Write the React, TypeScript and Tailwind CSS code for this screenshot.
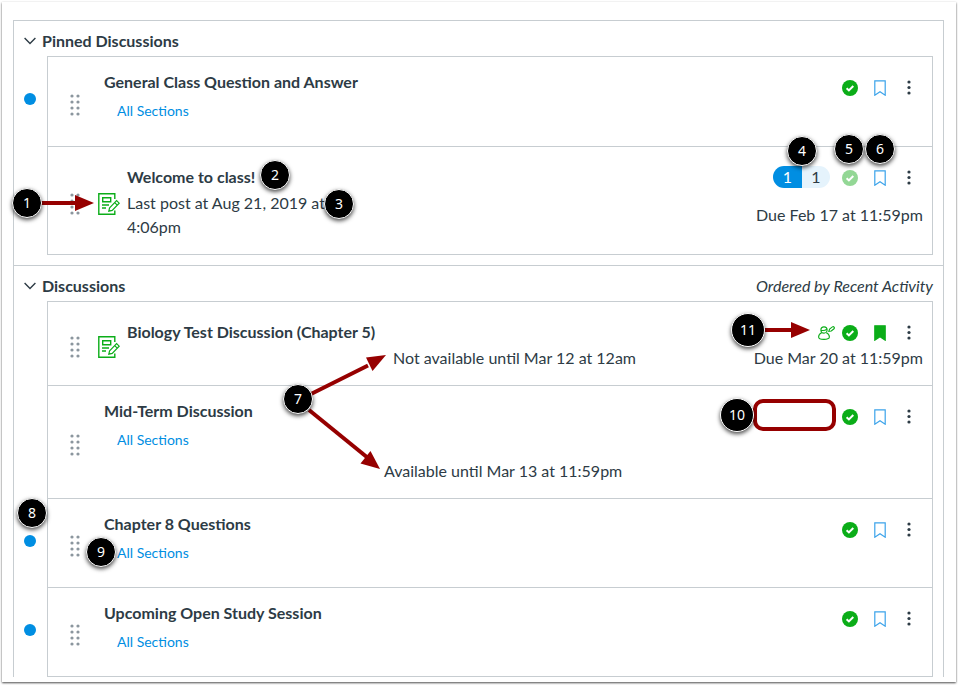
import { ReactNode } from "react";

type Discussion = {
  title: string;
  graded?: boolean;
  unread?: boolean;
  sections?: boolean;
  lastPost?: string;
  available?: string;
  due?: string;
  dueClass?: string;
  counts?: [number, number];
  faded?: boolean;
  subscribed?: boolean;
  peerReview?: boolean;
  rowClass?: string;
};

const pinned: Discussion[] = [
  { title: "General Class Question and Answer", unread: true, sections: true, rowClass: "min-h-[90px]" },
  {
    title: "Welcome to class!",
    graded: true,
    lastPost: "Last post at Aug 21, 2019 at 4:06pm",
    due: "Due Feb 17 at 11:59pm",
    dueClass: "mt-[13px]",
    counts: [1, 1],
    faded: true,
  },
];

const discussions: Discussion[] = [
  {
    title: "Biology Test Discussion (Chapter 5)",
    graded: true,
    available: "Not available until Mar 12 at 12am",
    due: "Due Mar 20 at 11:59pm",
    dueClass: "mt-px",
    subscribed: true,
    peerReview: true,
    rowClass: "min-h-[84px]",
  },
  {
    title: "Mid-Term Discussion",
    sections: true,
    available: "Available until Mar 13 at 11:59pm",
    rowClass: "min-h-[113px]",
  },
  { title: "Chapter 8 Questions", unread: true, sections: true },
  { title: "Upcoming Open Study Session", unread: true, sections: true },
];

const DragHandle = () => (
  <svg width="10" height="22" viewBox="0 0 10 22" fill="#8b969e" aria-hidden="true">
    {[2, 8].map((x) => [2, 8, 14, 20].map((y) => <circle key={`${x}-${y}`} cx={x} cy={y} r="1.6" />))}
  </svg>
);

const AssignmentIcon = () => (
  <svg width="22" height="22" viewBox="0 0 22 22" fill="none" stroke="#0bad18" strokeWidth="1.4" className="shrink-0">
    <path d="M16.800 6V.8H.8v20.4h16V17.500" />
    <path d="M4.700 4.700h8v4h-8zM4 12h7M4 15h4" />
    <path d="M11.600 14.800l7-7.200 2.600 2.600-7 7.200-3.400.8zM16.700 9.600l2.600 2.600" strokeWidth="1.2" />
  </svg>
);

const PeerReviewIcon = () => (
  <svg width="17" height="14" viewBox="0 0 17 14" fill="none" stroke="#0bad18" strokeWidth="1.1">
    <circle cx="6" cy="4" r="3.100" />
    <path d="M3 4.200c1.800.6 4.200.2 5.800-1" />
    <path d="M3.700 6.700C1.700 7.500.6 9 .6 11c0 1.700 2.500 2.400 5.400 2.400s5.400-.7 5.400-2.400c0-2-1.100-3.500-3.100-4.300" />
    <path d="M10.800 5.400l.8-2.400 2.800-2.100c1.300-.8 2.600.7 1.600 1.900l-2.700 2.200z" />
  </svg>
);

const CheckIcon = ({ faded }: { faded?: boolean }) => (
  <svg width="16" height="16" viewBox="0 0 16 16">
    <circle cx="8" cy="8" r="8" fill={faded ? "#93d795" : "#0bad18"} />
    <path d="M4.600 8.200l2.300 2.200 4.400-4.400" fill="none" stroke="#fff" strokeWidth="2" />
  </svg>
);

const BookmarkIcon = ({ filled }: { filled?: boolean }) => (
  <svg width="12" height="16" viewBox="0 0 12 16">
    <path
      d="M.8.8h10.400v14.400L6 11.800.8 15.200z"
      fill={filled ? "#0bad18" : "none"}
      stroke={filled ? "#0bad18" : "#3ba3ea"}
      strokeWidth="1.200"
    />
  </svg>
);

const MoreIcon = () => (
  <svg width="6" height="16" viewBox="0 0 6 16" fill="#2d3b45">
    <circle cx="2" cy="2" r="1.600" />
    <circle cx="2" cy="7.500" r="1.600" />
    <circle cx="2" cy="13" r="1.600" />
  </svg>
);

const IconButton = ({ label, children }: { label: string; children: ReactNode }) => (
  <button type="button" aria-label={label} className="flex h-6 w-[30px] items-center justify-center">
    {children}
  </button>
);

const Row = ({ item }: { item: Discussion }) => (
  <li className="flex">
    <div className="flex w-[33px] shrink-0 items-center justify-center pr-px pb-[6px]">
      {item.unread && <span className="h-3 w-3 rounded-full bg-[#008ee2]" />}
    </div>
    <div className={`flex flex-1 border-x border-b border-[#c7cdd1] pr-[7px] pl-[22px] ${item.rowClass ?? ""}`}>
      <div className="flex shrink-0 items-center pt-[6px]">
        <DragHandle />
      </div>
      {item.graded && (
        <div className="ml-[18px] flex shrink-0 items-center pt-[6px]">
          <AssignmentIcon />
        </div>
      )}
      <div
        className={
          item.graded
            ? "ml-[7px] w-[266px] shrink-0 pt-[18px] pb-[15px]"
            : "ml-6 w-[280px] shrink-0 pt-[13px] pb-[22px]"
        }
      >
        <h3 className="font-bold">{item.title}</h3>
        {item.lastPost && <p className="mt-[2px] max-w-[220px]">{item.lastPost}</p>}
        {item.sections && (
          <a href="#sections" className="mt-[5px] ml-[13px] block text-sm leading-6 text-[#008ee2]">
            All Sections
          </a>
        )}
      </div>
      <p className="flex-1 self-end pb-[15px] whitespace-nowrap">{item.available}</p>
      <div className="shrink-0 pt-[19px]">
        <div className="flex items-start justify-end">
          {item.counts && (
            <div className="mr-[5px] flex h-[22px] overflow-hidden rounded-full text-center leading-[22px]">
              <span className="w-[29px] bg-[#008ee2] text-white">{item.counts[0]}</span>
              <span className="w-[28px] bg-[#e5f3fc]">{item.counts[1]}</span>
            </div>
          )}
          {item.peerReview && (
            <span className="flex h-6 items-center">
              <PeerReviewIcon />
            </span>
          )}
          <IconButton label="Published">
            <CheckIcon faded={item.faded} />
          </IconButton>
          <IconButton label="Subscribe">
            <BookmarkIcon filled={item.subscribed} />
          </IconButton>
          <IconButton label="Manage discussion">
            <MoreIcon />
          </IconButton>
        </div>
        {item.due && <p className={`pr-[2px] text-right ${item.dueClass ?? ""}`}>{item.due}</p>}
      </div>
    </div>
  </li>
);

const Section = ({ title, note, items }: { title: string; note?: string; items: Discussion[] }) => (
  <section className="border-x border-t border-[#c7cdd1] pr-[10px]">
    <div className="flex h-[35px] items-center justify-between pt-[5px]">
      <h2 className="font-bold">
        <button type="button" className="flex items-center gap-[6px] pl-[10px]">
          <svg width="12" height="8" viewBox="0 0 12 8" fill="none" stroke="#2d3b45" strokeWidth="1.400">
            <path d="M.6 1l5.400 5.400L11.400 1" />
          </svg>
          {title}
        </button>
      </h2>
      {note && <p className="italic">{note}</p>}
    </div>
    <div className="ml-[33px] border-t border-[#c7cdd1]" />
    <ul>
      {items.map((item) => (
        <Row key={item.title} item={item} />
      ))}
    </ul>
  </section>
);

const callouts = [
  { n: 1, place: "left-[12px] top-[188px] size-[30px]" },
  { n: 2, place: "left-[260px] top-[160px] size-[30px]" },
  { n: 3, place: "left-[324px] top-[189px] size-[30px]" },
  { n: 4, place: "right-[141px] top-[136px] size-[30px]" },
  { n: 5, place: "right-[94px] top-[134px] size-[30px]" },
  { n: 6, place: "right-[63px] top-[134px] size-[30px]" },
  { n: 7, place: "left-[283px] top-[384px] size-[30px]" },
  { n: 8, place: "left-[17px] top-[498px] size-[30px]" },
  { n: 9, place: "left-[86px] top-[537px] size-[30px]" },
  { n: 10, place: "right-[204px] top-[398px] size-[34px]" },
  { n: 11, place: "right-[193px] top-[313px] size-[34px]" },
];

const Annotations = () => (
  <div className="pointer-events-none">
    <svg className="absolute top-[195px] left-[40px]" width="54" height="16" fill="#960000">
      <path d="M0 6h35V0l19 8-19 8v-6H0z" />
    </svg>
    <svg className="absolute top-[322px] right-[148px]" width="46" height="16" fill="#960000">
      <path d="M0 6h27V0l19 8-19 8v-6H0z" />
    </svg>
    <svg className="absolute top-[354px] left-[306px]" width="82" height="118" fill="#960000">
      <path d="M4 40.500L62 11.500" stroke="#960000" strokeWidth="4" />
      <path d="M80 1L60 3.500 66.500 17z" />
      <path d="M3 56L62 104" stroke="#960000" strokeWidth="4" />
      <path d="M74 115L64.500 97 54.500 109.500z" />
    </svg>
    <div className="absolute top-[399px] right-[122px] h-8 w-[83px] rounded-[10px] border-4 border-[#960000]" />
    {callouts.map(({ n, place }) => (
      <span
        key={n}
        className={`absolute flex items-center justify-center rounded-full border border-white bg-black font-['Noto_Sans',sans-serif] text-sm text-white shadow-[0_2px_4px_rgba(0,0,0,0.7)] ${place}`}
      >
        {n}
      </span>
    ))}
  </div>
);

const App = () => {
  return (
    <div className="bg-white p-[2px] pb-1 font-[Lato,sans-serif] text-base text-[#2d3b45]">
      <main className="bg-white pt-[18px] pr-3 pb-[5px] pl-[11px] shadow-[0_1px_2px_rgba(0,0,0,0.7)]">
        <Section title="Pinned Discussions" items={pinned} />
        <div className="h-[10px] border-x border-[#c7cdd1]" />
        <Section title="Discussions" note="Ordered by Recent Activity" items={discussions} />
      </main>
      <Annotations />
    </div>
  );
};

export default App;
